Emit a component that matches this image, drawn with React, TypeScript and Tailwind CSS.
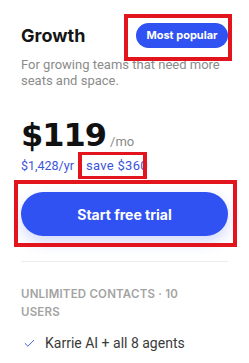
import { Check } from "lucide-react"

export default function App() {
  return (
    <div className="relative h-[363px] w-[249px] overflow-hidden bg-white font-['Roboto',sans-serif]">
      <div className="-ml-[10px] -mt-[10px] w-[269px] rounded-[22px] border border-[#e3e3f5] px-[30px] pb-10 pt-[32px]">
        <div className="flex items-center justify-between font-['Inter',sans-serif]">
          <h3 className="text-[18px] font-bold leading-6 text-[#151515]">Growth</h3>
          <span className="flex h-[25px] w-[92px] items-center justify-center rounded-full bg-[#3152f2] text-[11px] font-bold text-white">
            Most popular
          </span>
        </div>

        <p className="mt-[9px] text-[13px] leading-4 text-[#8b8b8b]">
          For growing teams that need more seats and space.
        </p>

        <div className="mt-[28px] flex items-baseline gap-[4px]">
          <span className="font-['DejaVu_Sans',sans-serif] text-[32px] font-bold leading-[36px] tracking-[-1px] text-[#111]">
            $119
          </span>
          <span className="text-[13px] text-[#8b8b8b]">/mo</span>
        </div>

        <div className="mt-[5px] flex items-center gap-[12px] text-[12.5px] leading-4 text-[#3a55d8]">
          <span>$1,428/yr</span>
          <span className="text-[13px] tracking-[0.3px]">save $360</span>
        </div>

        <button className="mt-[18px] flex h-[44px] w-full items-center justify-center rounded-full bg-[#3152f2] font-['Inter',sans-serif] text-[14px] font-bold text-white shadow-[0_6px_14px_rgba(49,82,242,0.22)]">
          Start free trial
        </button>

        <div className="mt-[25px] h-px bg-[#ebebf0]" />

        <p className="mt-[23px] max-w-[190px] font-['Inter',sans-serif] text-[11.5px] font-semibold uppercase leading-[18px] tracking-[0.2px] text-[#a3a3a3]">
          Unlimited contacts · 10 users
        </p>

        <div className="mt-[12px] flex items-center gap-[9px] text-[14px] leading-5 text-[#3a3a3a]">
          <Check className="ml-[2px] h-[13px] w-[13px] text-[#3a55d8]" strokeWidth={1.75} />
          <span>Karrie AI + all 8 agents</span>
        </div>
      </div>

      {/* annotation boxes */}
      <div className="pointer-events-none absolute left-[124px] top-[14px] h-[47px] w-[108px] border-4 border-[#e2141e]" />
      <div className="pointer-events-none absolute left-[78px] top-[152px] h-[27px] w-[69px] border-x-4 border-y-[3px] border-[#e2141e]" />
      <div className="pointer-events-none absolute left-[14px] top-[180px] h-[67px] w-[223px] border-[4px] border-[#e2141e]" />
    </div>
  )
}
